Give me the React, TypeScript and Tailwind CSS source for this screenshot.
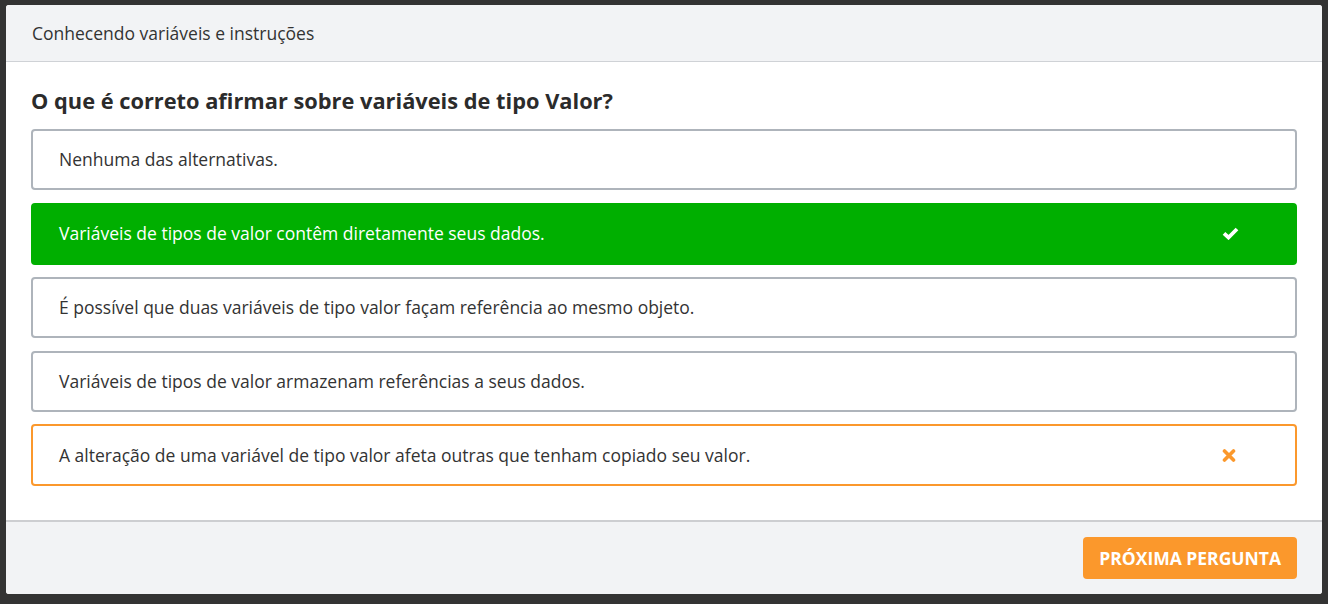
type Option = {
  text: string;
  state?: "correct" | "wrong";
};

const options: Option[] = [
  { text: "Nenhuma das alternativas." },
  { text: "Variáveis de tipos de valor contêm diretamente seus dados.", state: "correct" },
  { text: "É possível que duas variáveis de tipo valor façam referência ao mesmo objeto." },
  { text: "Variáveis de tipos de valor armazenam referências a seus dados." },
  {
    text: "A alteração de uma variável de tipo valor afeta outras que tenham copiado seu valor.",
    state: "wrong",
  },
];

function CheckIcon() {
  return (
    <svg width="17" height="13" viewBox="0 0 17 13" className="block">
      <polyline
        points="2,6.3 6.5,10.5 15,2"
        fill="none"
        stroke="currentColor"
        strokeWidth="3.8"
        strokeLinejoin="miter"
        strokeLinecap="butt"
      />
    </svg>
  );
}

function TimesIcon() {
  return (
    <svg width="14" height="13" viewBox="0 0 14 13" className="block">
      <path
        d="M2.5 2 L11.5 11 M11.5 2 L2.5 11"
        fill="none"
        stroke="currentColor"
        strokeWidth="3.6"
        strokeLinecap="round"
      />
    </svg>
  );
}

function OptionRow({ option }: { option: Option }) {
  if (option.state === "correct") {
    return (
      <div className="flex h-[62px] items-center justify-between rounded-[4px] border-2 border-[#00af00] bg-[#00af00] pl-[26px] pr-[56px] font-medium text-white">
        <span>{option.text}</span>
        <CheckIcon />
      </div>
    );
  }
  if (option.state === "wrong") {
    return (
      <div className="flex h-[62px] items-center justify-between rounded-[4px] border-2 border-[#fb982c] bg-white pl-[26px] pr-[59px] text-[#333]">
        <span>{option.text}</span>
        <span className="text-[#fb982c]">
          <TimesIcon />
        </span>
      </div>
    );
  }
  return (
    <div className="flex h-[61px] items-center rounded-[4px] border-2 border-[#aeb4bb] bg-white pl-[26px] text-[#333]">
      <span>{option.text}</span>
    </div>
  );
}

export default function App() {
  return (
    <div
      className="h-[604px] bg-[#333333] pt-[5px] pr-[6px] pb-[10px] pl-[6px]"
      style={{ fontFamily: '"Open Sans", sans-serif' }}
    >
      <div className="flex h-full flex-col overflow-hidden rounded-[3px] bg-white">
        {/* header */}
        <div className="flex h-[57px] items-center border-b border-[#cfd2d6] bg-[#f2f3f5] px-[26px] text-[17.5px] text-[#333]">
          Conhecendo variáveis e instruções
        </div>

        {/* body */}
        <div className="flex flex-1 flex-col px-[25px] pt-[24px]">
          <h1 className="mb-[14px] text-[21.8px] leading-[29px] font-bold text-[#2b2b2b]">
            O que é correto afirmar sobre variáveis de tipo Valor?
          </h1>
          <div className="flex flex-col gap-[12.5px] text-[17.5px]">
            {options.map((o) => (
              <OptionRow key={o.text} option={o} />
            ))}
          </div>
        </div>

        {/* footer */}
        <div className="flex h-[74px] items-center justify-end border-t-2 border-[#cdced1] bg-[#f2f3f5] px-[25px]">
          <button className="h-[42px] rounded-[4px] bg-[#fb982c] px-[16px] text-[17.5px] font-bold text-white">
            PRÓXIMA PERGUNTA
          </button>
        </div>
      </div>
    </div>
  );
}
